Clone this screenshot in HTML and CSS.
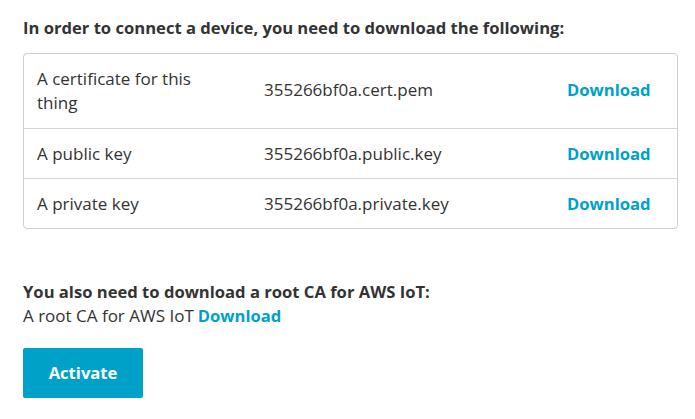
FILE: index.html
```html
<!DOCTYPE html>
<html>
<head>
<meta charset="utf-8">
<link rel="stylesheet" href="styles.css">
</head>
<body>
<div class="page">
  <h2 class="heading">In order to connect a device, you need to download the following:</h2>
  <div class="files">
    <div class="row row-tall">
      <div class="cell name">A certificate for this thing</div>
      <div class="cell file">355266bf0a.cert.pem</div>
      <div class="cell action"><a class="link" href="#">Download</a></div>
    </div>
    <div class="row">
      <div class="cell name">A public key</div>
      <div class="cell file">355266bf0a.public.key</div>
      <div class="cell action"><a class="link" href="#">Download</a></div>
    </div>
    <div class="row">
      <div class="cell name">A private key</div>
      <div class="cell file">355266bf0a.private.key</div>
      <div class="cell action"><a class="link" href="#">Download</a></div>
    </div>
  </div>
  <h3 class="subheading">You also need to download a root CA for AWS IoT:</h3>
  <p class="root">A root CA for AWS IoT<a class="link" href="#">Download</a></p>
  <button class="activate">Activate</button>
</div>
</body>
</html>
```
FILE: styles.css
```css
html, body {
  margin: 0;
  padding: 0;
  background: #ffffff;
}
body {
  font-family: "Open Sans", "Noto Sans", sans-serif;
  color: #333333;
  font-size: 17px;
}
.page {
  padding: 16px 17px 0 23px;
}
.heading {
  margin: 0 0 13px 0;
  font-size: 16.6px;
  font-weight: 700;
  line-height: 24px;
  color: #333333;
}
.files {
  border: 1px solid #cfcfcf;
  border-radius: 4px;
}
.row {
  display: grid;
  grid-template-columns: 227px 303px 1fr;
  align-items: center;
  height: 49px;
  border-top: 1px solid #d5d5d5;
}
.row:first-child {
  border-top: none;
  height: 74px;
}
.cell {
  padding: 0 13px;
  line-height: 24px;
}
.name {
  padding-right: 24px;
}
.row-tall .action,
.row-tall .file {
  padding-bottom: 2px;
}
.link {
  color: #00a1c9;
  font-weight: 700;
  font-size: 16.6px;
  text-decoration: none;
}
.subheading {
  margin: 51px 0 0 0;
  font-size: 16.6px;
  font-weight: 700;
  line-height: 24px;
  color: #333333;
}
.root {
  margin: 0;
  line-height: 24px;
}
.root .link {
  margin-left: 4px;
}
.activate {
  margin-top: 20px;
  width: 120px;
  height: 50px;
  padding-bottom: 2px;
  background: #00a1c9;
  color: #ffffff;
  border: none;
  border-radius: 2px;
  font-family: inherit;
  font-size: 16.6px;
  font-weight: 700;
}
```
